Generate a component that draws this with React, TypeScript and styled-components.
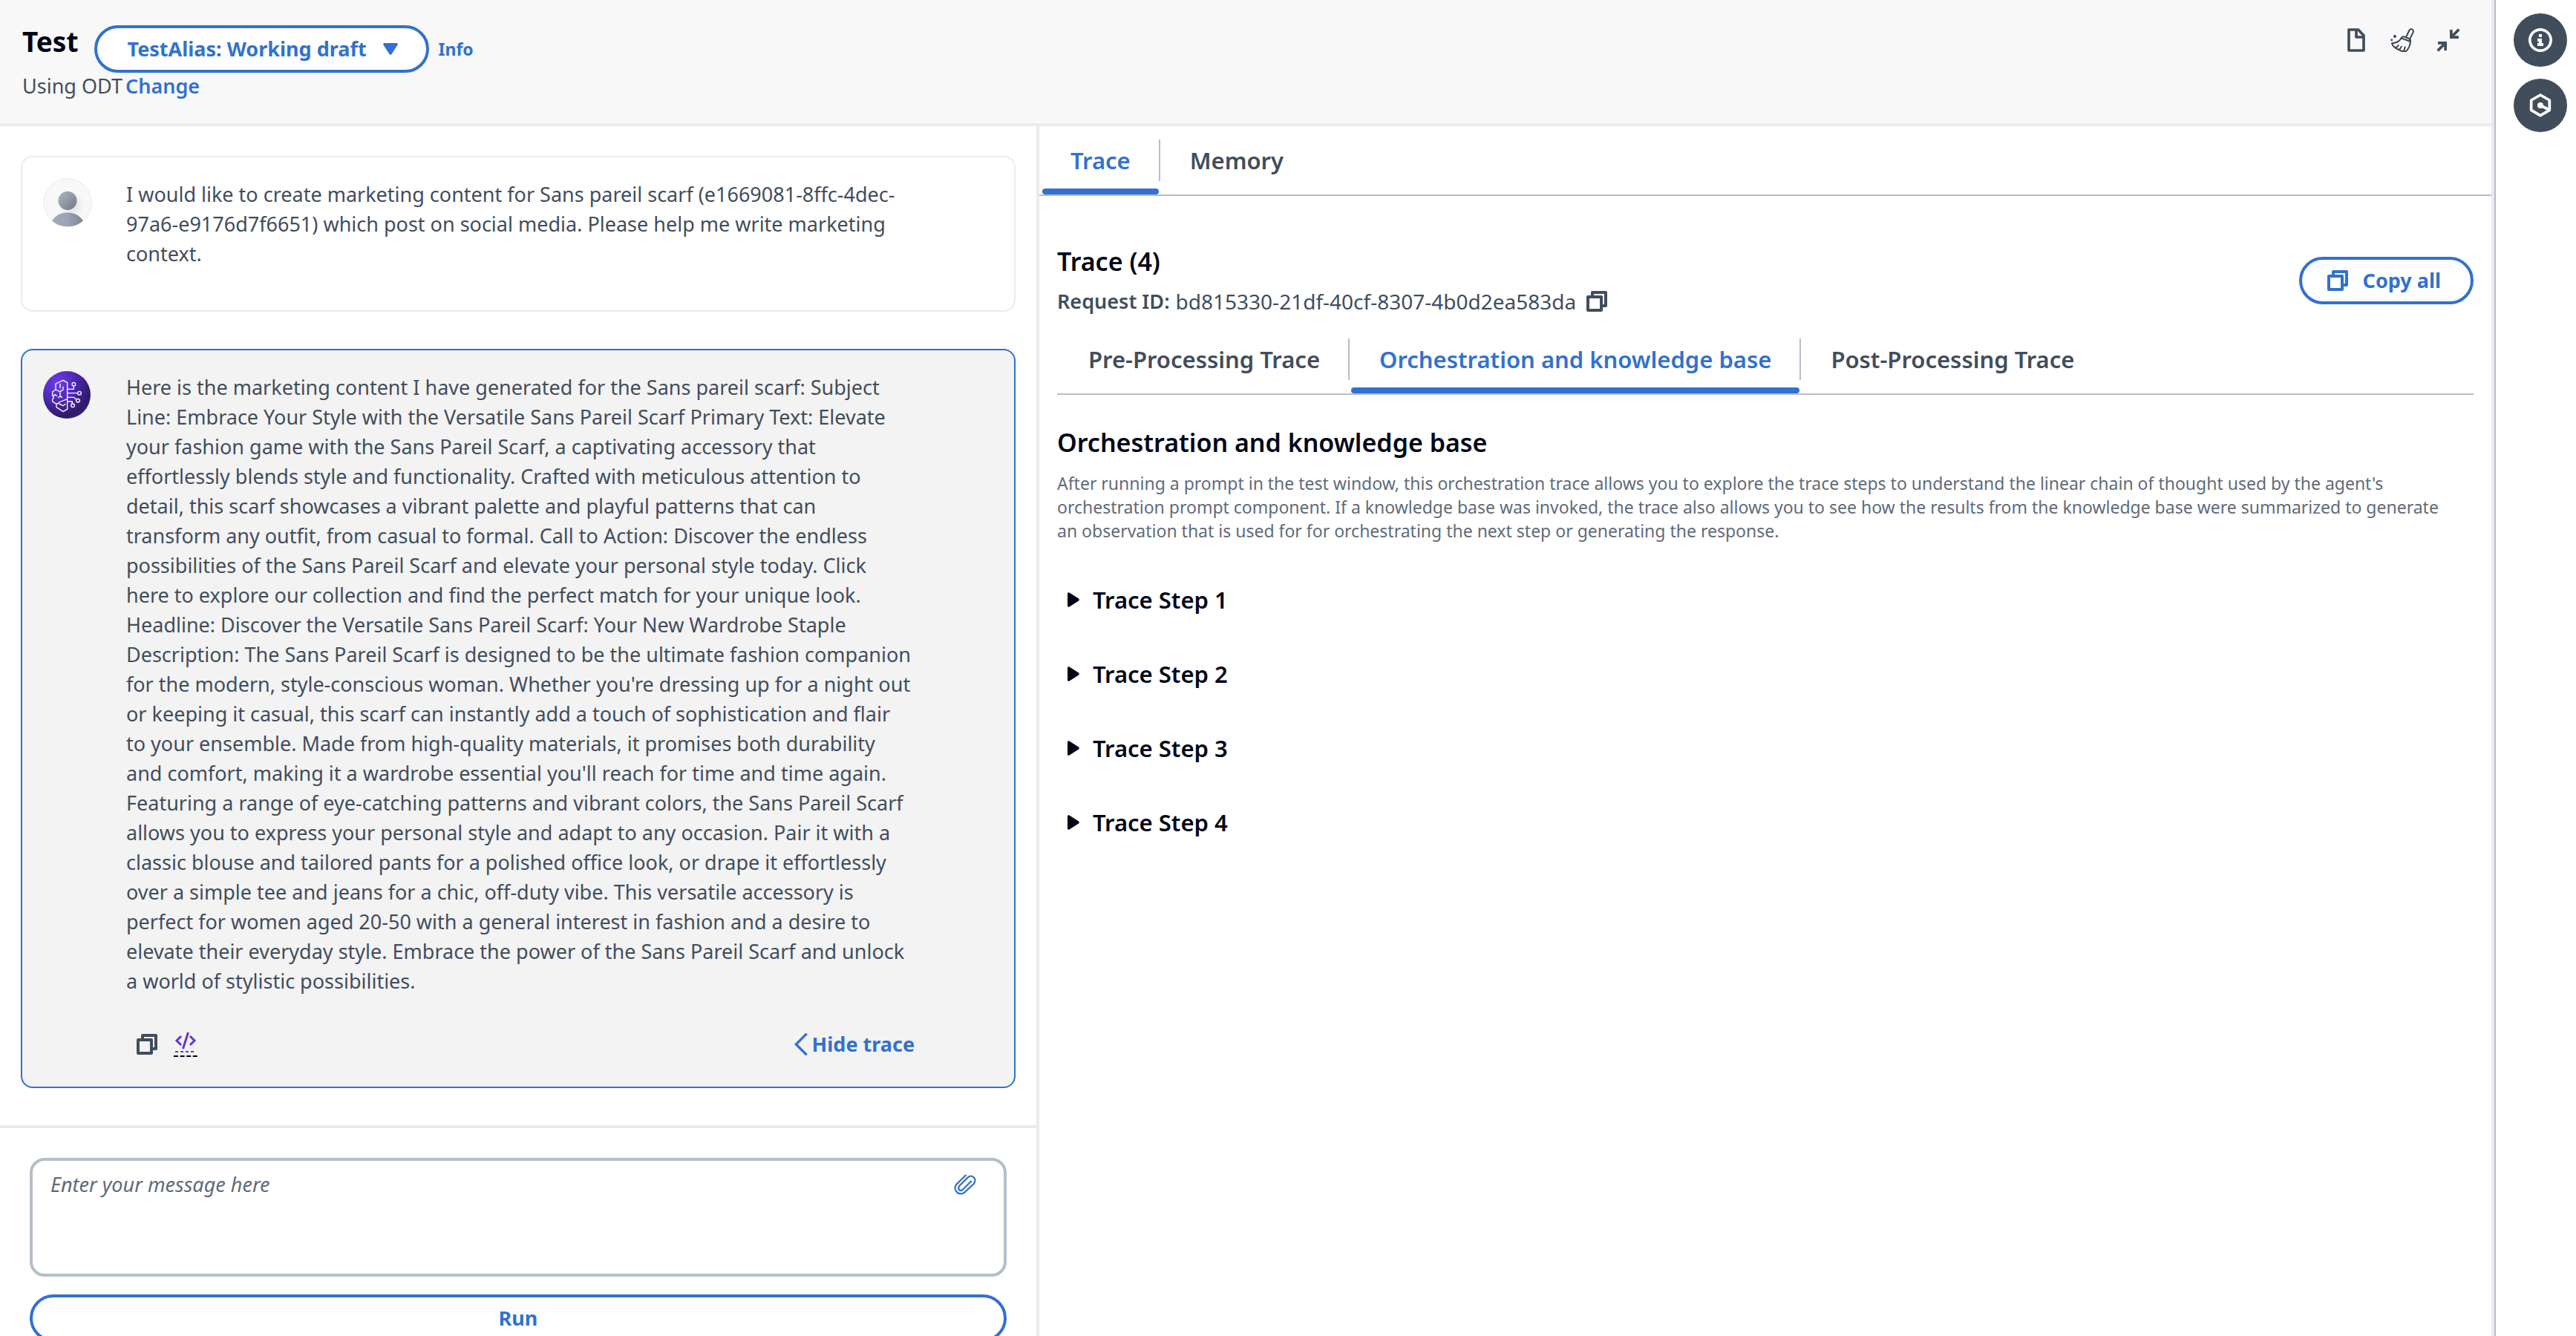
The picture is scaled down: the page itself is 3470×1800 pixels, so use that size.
import React, { useState } from "react";
import styled, { createGlobalStyle, css } from "styled-components";

const color = {
  blue: "#3271cf",
  text: "#424d5c",
  heading: "#000716",
  muted: "#5f6b7a",
  line: "#b6bec9",
  divider: "#e9ebed",
};

const GlobalStyle = createGlobalStyle`
  *, *::before, *::after { box-sizing: border-box; }
  body {
    margin: 0;
    background: #fff;
    color: ${color.text};
    font-family: "Noto Sans", "Open Sans", sans-serif;
    font-size: 27px;
    line-height: 40px;
  }
  button, select, textarea { font: inherit; color: inherit; }
  h1, h2, h3, p { margin: 0; }
  svg { display: block; }
`;

const Shell = styled.div`
  display: flex;
  height: 100vh;
  overflow: hidden;
`;

const Panel = styled.main`
  flex: 1;
  min-width: 0;
  display: flex;
  flex-direction: column;
  border-right: 4px solid ${color.divider};
`;

const Header = styled.header`
  display: flex;
  flex-shrink: 0;
  justify-content: space-between;
  padding: 34px 42px 32px 30px;
  background: #f8f8f8;
  border-bottom: 4px solid ${color.divider};
`;

const TitleRow = styled.div`
  display: flex;
  align-items: center;
  gap: 12px;
`;

const Title = styled.h1`
  align-self: flex-start;
  margin-right: 10px;
  color: ${color.heading};
  font-size: 37px;
  font-weight: 700;
  line-height: 44px;
`;

const AliasField = styled.label`
  display: grid;
  align-items: center;

  > * {
    grid-area: 1 / 1;
  }

  svg {
    justify-self: end;
    margin-right: 42px;
    pointer-events: none;
  }
`;

const pill = css`
  height: 64px;
  border: 4px solid ${color.blue};
  border-radius: 32px;
  background: #fff;
  color: ${color.blue};
  font-weight: 700;
  cursor: pointer;
`;

const AliasSelect = styled.select`
  ${pill}
  appearance: none;
  padding: 0 80px 0 40px;
`;

const TextLink = styled.a<{ $small?: boolean }>`
  color: ${color.blue};
  font-size: ${(p) => (p.$small ? "23px" : "27px")};
  font-weight: ${(p) => (p.$small ? 700 : 600)};
  text-decoration: none;
`;

const ModelLine = styled.p`
  display: flex;
  gap: 4px;
  line-height: 36px;
`;

const Actions = styled.div`
  display: flex;
  align-items: flex-start;
  gap: 30px;
`;

const IconButton = styled.button`
  display: flex;
  align-items: center;
  justify-content: center;
  min-width: 32px;
  height: 40px;
  padding: 0;
  border: 0;
  background: none;
  cursor: pointer;
`;

const Columns = styled.div`
  flex: 1;
  min-height: 0;
  display: grid;
  grid-template-columns: minmax(0, 1400fr) minmax(0, 1956fr);
`;

const ChatColumn = styled.section`
  border-right: 4px solid ${color.divider};
`;

const Conversation = styled.div`
  display: flex;
  flex-direction: column;
  gap: 50px;
  padding: 40px 28px 50px;
  border-bottom: 4px solid ${color.divider};
`;

const Message = styled.article<{ $selected?: boolean }>`
  display: flex;
  align-items: flex-start;
  gap: 46px;
  padding: ${(p) => (p.$selected ? "28px 28px 37px" : "28px 28px 56px")};
  border: 2px solid ${(p) => (p.$selected ? color.blue : color.divider)};
  border-radius: 16px;
  background: ${(p) => (p.$selected ? "#f3f3f3" : "#fff")};
`;

const Avatar = styled.div`
  flex: none;
  width: 66px;
`;

const MessageBody = styled.div`
  width: 1062px;
  padding-top: 2px;
`;

const MessageText = styled.p`
  white-space: pre;
`;

const MessageFooter = styled.div`
  display: flex;
  align-items: center;
  justify-content: space-between;
  padding: 45px 0 0 12px;
`;

const FooterIcons = styled.div`
  display: flex;
  gap: 20px;
`;

const TraceToggle = styled.button`
  display: flex;
  align-items: center;
  gap: 6px;
  padding: 0;
  border: 0;
  background: none;
  color: ${color.blue};
  font-weight: 700;
  cursor: pointer;
`;

const Composer = styled.form`
  display: grid;
  gap: 24px;
  padding: 40px;
`;

const MessageField = styled.div`
  display: grid;

  > * {
    grid-area: 1 / 1;
  }

  > button {
    place-self: start end;
    margin: 16px 40px;
    color: ${color.blue};
  }
`;

const MessageInput = styled.textarea`
  height: 160px;
  padding: 12px 100px 12px 24px;
  border: 4px solid ${color.line};
  border-radius: 20px;
  resize: none;

  &::placeholder {
    color: ${color.muted};
    font-style: italic;
    opacity: 1;
  }
`;

const RunButton = styled.button`
  ${pill}
`;

const TraceColumn = styled.section`
  min-width: 0;
`;

const TabList = styled.div`
  display: flex;
  gap: 2px;
  padding: 18px 0 0 4px;
  border-bottom: 2px solid ${color.line};
`;

const Tab = styled.button<{ $active?: boolean }>`
  padding: 0;
  border: 0;
  background: none;
  color: ${(p) => (p.$active ? color.blue : color.text)};
  font-size: 31px;
  font-weight: 600;
  cursor: pointer;

  span {
    display: block;
    padding: 0 38px;
    border-right: 2px solid ${color.line};
    line-height: 56px;
  }

  &:last-child span {
    border-right-color: transparent;
  }

  &::after {
    content: "";
    display: block;
    height: 8px;
    margin: 10px 2px 0 0;
    border-radius: 4px;
    background: ${(p) => (p.$active ? color.blue : "transparent")};
  }
`;

const TraceContent = styled.div`
  padding: 66px 24px 0;
`;

const TraceHeader = styled.div`
  display: flex;
  align-items: center;
  justify-content: space-between;
  padding-bottom: 12px;
`;

const Heading = styled.h2`
  color: ${color.heading};
  font-size: 34px;
  font-weight: 600;
  line-height: 44px;
`;

const RequestId = styled.p`
  display: flex;
  gap: 8px;
  padding-top: 12px;

  strong {
    font-weight: 600;
  }
`;

const RequestValue = styled.span`
  margin-right: 4px;
  font-size: 28px;
`;

const CopyAllButton = styled.button`
  ${pill}
  display: flex;
  align-items: center;
  gap: 20px;
  padding: 0 40px 0 34px;
`;

const Orchestration = styled.section`
  padding-top: 42px;
`;

const Description = styled.p`
  padding: 17px 0 27px;
  color: ${color.muted};
  font-size: 23px;
  line-height: 32px;
`;

const StepButton = styled.button`
  display: flex;
  align-items: center;
  gap: 18px;
  height: 100px;
  padding: 0 0 0 14px;
  border: 0;
  background: none;
  color: ${color.heading};
  font-size: 31px;
  font-weight: 600;
  cursor: pointer;
`;

const Rail = styled.aside`
  display: flex;
  flex-direction: column;
  gap: 16px;
  padding: 18px 12px 18px 24px;
  border-left: 2px solid ${color.line};
`;

const RailButton = styled.button`
  display: grid;
  place-items: center;
  width: 72px;
  height: 72px;
  padding: 0;
  border: 0;
  border-radius: 50%;
  background: #424d5c;
  color: #fff;
  cursor: pointer;
`;

const CopyIcon = () => (
  <svg width="28" height="28" viewBox="0 0 28 28" fill="none" stroke="currentColor" strokeWidth="4" strokeLinejoin="round">
    <path d="M2 8h18v18H2z" />
    <path d="M8 8V2h18v18h-6" />
  </svg>
);

const CaretDown = () => (
  <svg width="20" height="16" viewBox="0 0 20 16" fill="currentColor" color={color.blue}>
    <path d="M1.500 0h17q2 .5 1 2.500l-8 12.500q-1.500 1.500-3 0l-8-12.500q-1-2 1-2.500z" />
  </svg>
);

const CaretRight = () => (
  <svg width="16" height="20" viewBox="0 0 16 20" fill="currentColor">
    <path d="M0 1.500q.5-2 2.500-1l12.500 8q1.500 1.500 0 3l-12.500 8q-2 1-2.500-1z" />
  </svg>
);

const FileIcon = () => (
  <svg width="24" height="32" viewBox="36 60 72 96" fill="none" stroke="currentColor" strokeWidth="11" strokeLinejoin="round">
    <path d="M42 66h38l22 23v61H42z" />
    <path d="M72 66v30h30" />
  </svg>
);

const BroomIcon = () => (
  <svg width="32" height="32" viewBox="204 48 96 96" fill="none" stroke="#3c434d" strokeWidth="6" strokeLinecap="round" strokeLinejoin="round">
    <path d="M268 82l12-25q4-7 11-5 8 4 5 12l-12 25" />
    <path d="M250 86q3-6 9-4l20 8q8 4 6 12l-37-14" />
    <path d="M249 86q-8 20-39 23 4 18 38 31 12 3 21 0 14-16 16-38" />
    <path d="M226 125q7 0 10-8M240 134q6-5 8-12M258 138q4-6 5-14" />
    <circle cx="222" cy="81" r="3" fill="#3c434d" />
    <circle cx="209" cy="95" r="1.500" fill="#3c434d" />
  </svg>
);

const CollapseIcon = () => (
  <svg width="32" height="32" viewBox="396 60 96 96" fill="none" stroke="currentColor" strokeWidth="11">
    <path d="M455.500 66v30.500H486M456 96l31-31" />
    <path d="M402 119.500h30.500V150M432 120l-31 31" />
  </svg>
);

const ClipIcon = () => (
  <svg width="32" height="30" viewBox="852 722 96 90" fill="none" stroke="currentColor" strokeWidth="7">
    <path d="M904 728L865 766C850 786 870 814 896 800L935 764C950 746 930 722 911 738L877 772C868 786 880 796 890 788L926 752" />
  </svg>
);

const ChevronLeft = () => (
  <svg width="18" height="30" viewBox="202 156 54 90" fill="none" stroke="currentColor" strokeWidth="10">
    <path d="M252 158l-43 43 43 43" />
  </svg>
);

const CodeIcon = () => (
  <svg width="32" height="34" viewBox="0 0 32 34" fill="none" stroke="#6237d9" strokeWidth="3">
    <path d="M10 6l-6 6 6 6M22 6l6 6-6 6M19.500 1l-7 22" />
    <path d="M2 27h28" strokeWidth="2" strokeDasharray="4 3" />
    <path d="M0 33h32" stroke="#000716" strokeWidth="2" strokeDasharray="6 2.600" />
  </svg>
);

const InfoIcon = () => (
  <svg width="32" height="32" viewBox="1008 114 96 96" fill="currentColor">
    <circle cx="1056" cy="162" r="42.500" fill="none" stroke="currentColor" strokeWidth="11" />
    <path d="M1050 138h12v12h-12zM1044 156h18v18h6v12h-24v-12h6v-6h-6z" />
  </svg>
);

const AssistantIcon = () => (
  <svg width="32" height="32" viewBox="1008 378 96 96" fill="none" stroke="currentColor" strokeWidth="11" strokeLinejoin="round">
    <path d="M1056 384l37 21v40l-37 22-37-22v-40z" />
    <path d="M1056 426l36 18" />
    <circle cx="1056" cy="426" r="12" fill="currentColor" stroke="none" />
  </svg>
);

const UserAvatar = () => (
  <svg width="66" height="66" viewBox="26 12 200 200">
    <defs>
      <linearGradient id="head" x1="0" y1="0" x2="1" y2="1">
        <stop offset="0" stopColor="#b0b8c4" />
        <stop offset="1" stopColor="#6f7987" />
      </linearGradient>
      <linearGradient id="torso" x1="0" y1="0" x2="1" y2="0">
        <stop offset="0" stopColor="#a3adba" />
        <stop offset="0.500" stopColor="#9aa4b2" />
        <stop offset="1" stopColor="#78818e" />
      </linearGradient>
      <radialGradient id="shade">
        <stop offset="0" stopColor="#dcdcde" />
        <stop offset="1" stopColor="#f8f8f8" />
      </radialGradient>
      <clipPath id="disc">
        <circle cx="126" cy="112" r="98" />
      </clipPath>
    </defs>
    <circle cx="126" cy="112" r="98" fill="#f8f8f8" stroke="#ebebec" strokeWidth="3" />
    <g clipPath="url(#disc)">
      <circle cx="142" cy="120" r="54" fill="url(#shade)" />
      <ellipse cx="126" cy="216" rx="72" ry="64" fill="url(#torso)" />
    </g>
    <circle cx="126" cy="104" r="38" fill="url(#head)" />
  </svg>
);

const BotAvatar = () => (
  <svg width="64" height="64" viewBox="24 30 192 192" fill="none" stroke="#fff" strokeWidth="4" strokeLinejoin="round">
    <defs>
      <radialGradient id="bot" cx="0.300" cy="0.250" r="0.850">
        <stop offset="0" stopColor="#6d3af0" />
        <stop offset="0.450" stopColor="#4f28b4" />
        <stop offset="0.850" stopColor="#301a66" />
        <stop offset="1" stopColor="#3a1f86" />
      </radialGradient>
    </defs>
    <circle cx="120" cy="126" r="96" fill="url(#bot)" stroke="none" />
    <path d="M122 76L105 67 75 81v24l-13 9v13l5 10-5 8v8l16 10v13l27 17 17-9z" />
    <path d="M75 105l18 8 12-8V92M93 113v18M93 80v20M62 132l11-7 8 6M85 139l8-8 9 6M122 143L88 156M78 163l12-6M105 170l-18-9M105 170l10-8" />
    <path d="M122 103h26V91M122 119h40M122 136h26l10 8M122 153h20v8" />
    <circle cx="148" cy="83" r="7" />
    <circle cx="171" cy="119" r="7" />
    <circle cx="165" cy="149" r="7" />
    <circle cx="144" cy="169" r="7" />
  </svg>
);

const question = `I would like to create marketing content for Sans pareil scarf (e1669081-8ffc-4dec-
97a6-e9176d7f6651) which post on social media. Please help me write marketing
context.`;

const answer = `Here is the marketing content I have generated for the Sans pareil scarf: Subject
Line: Embrace Your Style with the Versatile Sans Pareil Scarf Primary Text: Elevate
your fashion game with the Sans Pareil Scarf, a captivating accessory that
effortlessly blends style and functionality. Crafted with meticulous attention to
detail, this scarf showcases a vibrant palette and playful patterns that can
transform any outfit, from casual to formal. Call to Action: Discover the endless
possibilities of the Sans Pareil Scarf and elevate your personal style today. Click
here to explore our collection and find the perfect match for your unique look.
Headline: Discover the Versatile Sans Pareil Scarf: Your New Wardrobe Staple
Description: The Sans Pareil Scarf is designed to be the ultimate fashion companion
for the modern, style-conscious woman. Whether you're dressing up for a night out
or keeping it casual, this scarf can instantly add a touch of sophistication and flair
to your ensemble. Made from high-quality materials, it promises both durability
and comfort, making it a wardrobe essential you'll reach for time and time again.
Featuring a range of eye-catching patterns and vibrant colors, the Sans Pareil Scarf
allows you to express your personal style and adapt to any occasion. Pair it with a
classic blouse and tailored pants for a polished office look, or drape it effortlessly
over a simple tee and jeans for a chic, off-duty vibe. This versatile accessory is
perfect for women aged 20-50 with a general interest in fashion and a desire to
elevate their everyday style. Embrace the power of the Sans Pareil Scarf and unlock
a world of stylistic possibilities.`;

const steps = ["Trace Step 1", "Trace Step 2", "Trace Step 3", "Trace Step 4"];

function Tabs({ labels, initial }: { labels: string[]; initial: number }) {
  const [active, setActive] = useState(initial);
  return (
    <TabList role="tablist">
      {labels.map((label, i) => (
        <Tab key={label} role="tab" aria-selected={i === active} $active={i === active} onClick={() => setActive(i)}>
          <span>{label}</span>
        </Tab>
      ))}
    </TabList>
  );
}

export default function App() {
  return (
    <Shell>
      <GlobalStyle />
      <Panel>
        <Header>
          <div>
            <TitleRow>
              <Title>Test</Title>
              <AliasField>
                <AliasSelect aria-label="Alias">
                  <option>TestAlias: Working draft</option>
                </AliasSelect>
                <CaretDown />
              </AliasField>
              <TextLink href="#info" $small>Info</TextLink>
            </TitleRow>
            <ModelLine>
              Using ODT <TextLink href="#change">Change</TextLink>
            </ModelLine>
          </div>
          <Actions>
            <IconButton aria-label="View document"><FileIcon /></IconButton>
            <IconButton aria-label="Clear conversation"><BroomIcon /></IconButton>
            <IconButton aria-label="Collapse"><CollapseIcon /></IconButton>
          </Actions>
        </Header>
        <Columns>
          <ChatColumn>
            <Conversation>
              <Message>
                <Avatar><UserAvatar /></Avatar>
                <MessageBody>
                  <MessageText>{question}</MessageText>
                </MessageBody>
              </Message>
              <Message $selected>
                <Avatar><BotAvatar /></Avatar>
                <MessageBody>
                  <MessageText>{answer}</MessageText>
                  <MessageFooter>
                    <FooterIcons>
                      <IconButton aria-label="Copy message"><CopyIcon /></IconButton>
                      <IconButton aria-label="View source"><CodeIcon /></IconButton>
                    </FooterIcons>
                    <TraceToggle><ChevronLeft />Hide trace</TraceToggle>
                  </MessageFooter>
                </MessageBody>
              </Message>
            </Conversation>
            <Composer onSubmit={(e) => e.preventDefault()}>
              <MessageField>
                <MessageInput aria-label="Message" placeholder="Enter your message here" />
                <IconButton type="button" aria-label="Attach file"><ClipIcon /></IconButton>
              </MessageField>
              <RunButton>Run</RunButton>
            </Composer>
          </ChatColumn>
          <TraceColumn>
            <Tabs labels={["Trace", "Memory"]} initial={0} />
            <TraceContent>
              <TraceHeader>
                <div>
                  <Heading>Trace (4)</Heading>
                  <RequestId>
                    <strong>Request ID:</strong>
                    <RequestValue>bd815330-21df-40cf-8307-4b0d2ea583da</RequestValue>
                    <IconButton aria-label="Copy request ID"><CopyIcon /></IconButton>
                  </RequestId>
                </div>
                <CopyAllButton><CopyIcon />Copy all</CopyAllButton>
              </TraceHeader>
              <Tabs
                labels={["Pre-Processing Trace", "Orchestration and knowledge base", "Post-Processing Trace"]}
                initial={1}
              />
              <Orchestration>
                <Heading as="h3">Orchestration and knowledge base</Heading>
                <Description>
                  After running a prompt in the test window, this orchestration trace allows you to explore the trace
                  steps to understand the linear chain of thought used by the agent's
                  <br />
                  orchestration prompt component. If a knowledge base was invoked, the trace also allows you to see how
                  the results from the knowledge base were summarized to generate
                  <br />
                  an observation that is used for for orchestrating the next step or generating the response.
                </Description>
                {steps.map((step) => (
                  <StepButton key={step} aria-expanded={false}>
                    <CaretRight />
                    {step}
                  </StepButton>
                ))}
              </Orchestration>
            </TraceContent>
          </TraceColumn>
        </Columns>
      </Panel>
      <Rail>
        <RailButton aria-label="Info panel"><InfoIcon /></RailButton>
        <RailButton aria-label="Assistant"><AssistantIcon /></RailButton>
      </Rail>
    </Shell>
  );
}
